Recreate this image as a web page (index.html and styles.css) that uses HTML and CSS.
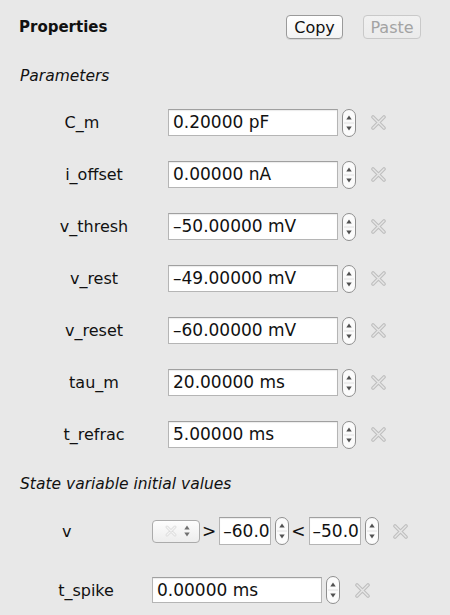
FILE: index.html
```html
<!DOCTYPE html>
<html>
<head>
<meta charset="utf-8">
<link rel="stylesheet" href="styles.css">
</head>
<body>
<div class="panel">
  <div class="header">
    <div class="title">Properties</div>
    <div class="btns">
      <button class="btn">Copy</button>
      <button class="btn disabled">Paste</button>
    </div>
  </div>

  <div class="section first">Parameters</div>

  <div class="rows">
    <div class="row">
      <div class="lbl lbl-cm">C_m</div>
      <div class="field">0.20000 pF</div>
      <svg class="stepper" width="14" height="28" viewBox="0 0 14 28"><rect x="0.5" y="0.5" width="13" height="27" rx="6.5" fill="#fbfbfb" stroke="#8e8e8e"/><line x1="2" y1="14" x2="12" y2="14" stroke="#e0e0e0"/><path d="M7 6.5 L9.7 10.5 L4.3 10.5 Z" fill="#505050"/><path d="M7 21.5 L9.7 17.5 L4.3 17.5 Z" fill="#505050"/></svg>
      <svg class="xicon" width="15" height="15" viewBox="0 0 15 15"><path d="M2 2 L13 13 M13 2 L2 13" stroke="#bfbfbf" stroke-width="3.6" stroke-linecap="round"/><path d="M2 2 L13 13 M13 2 L2 13" stroke="#e6e6e6" stroke-width="1.4" stroke-linecap="round"/></svg>
    </div>
    <div class="row">
      <div class="lbl">i_offset</div>
      <div class="field">0.00000 nA</div>
      <svg class="stepper" width="14" height="28" viewBox="0 0 14 28"><rect x="0.5" y="0.5" width="13" height="27" rx="6.5" fill="#fbfbfb" stroke="#8e8e8e"/><line x1="2" y1="14" x2="12" y2="14" stroke="#e0e0e0"/><path d="M7 6.5 L9.7 10.5 L4.3 10.5 Z" fill="#505050"/><path d="M7 21.5 L9.7 17.5 L4.3 17.5 Z" fill="#505050"/></svg>
      <svg class="xicon" width="15" height="15" viewBox="0 0 15 15"><path d="M2 2 L13 13 M13 2 L2 13" stroke="#bfbfbf" stroke-width="3.6" stroke-linecap="round"/><path d="M2 2 L13 13 M13 2 L2 13" stroke="#e6e6e6" stroke-width="1.4" stroke-linecap="round"/></svg>
    </div>
    <div class="row">
      <div class="lbl">v_thresh</div>
      <div class="field">–50.00000 mV</div>
      <svg class="stepper" width="14" height="28" viewBox="0 0 14 28"><rect x="0.5" y="0.5" width="13" height="27" rx="6.5" fill="#fbfbfb" stroke="#8e8e8e"/><line x1="2" y1="14" x2="12" y2="14" stroke="#e0e0e0"/><path d="M7 6.5 L9.7 10.5 L4.3 10.5 Z" fill="#505050"/><path d="M7 21.5 L9.7 17.5 L4.3 17.5 Z" fill="#505050"/></svg>
      <svg class="xicon" width="15" height="15" viewBox="0 0 15 15"><path d="M2 2 L13 13 M13 2 L2 13" stroke="#bfbfbf" stroke-width="3.6" stroke-linecap="round"/><path d="M2 2 L13 13 M13 2 L2 13" stroke="#e6e6e6" stroke-width="1.4" stroke-linecap="round"/></svg>
    </div>
    <div class="row">
      <div class="lbl">v_rest</div>
      <div class="field">–49.00000 mV</div>
      <svg class="stepper" width="14" height="28" viewBox="0 0 14 28"><rect x="0.5" y="0.5" width="13" height="27" rx="6.5" fill="#fbfbfb" stroke="#8e8e8e"/><line x1="2" y1="14" x2="12" y2="14" stroke="#e0e0e0"/><path d="M7 6.5 L9.7 10.5 L4.3 10.5 Z" fill="#505050"/><path d="M7 21.5 L9.7 17.5 L4.3 17.5 Z" fill="#505050"/></svg>
      <svg class="xicon" width="15" height="15" viewBox="0 0 15 15"><path d="M2 2 L13 13 M13 2 L2 13" stroke="#bfbfbf" stroke-width="3.6" stroke-linecap="round"/><path d="M2 2 L13 13 M13 2 L2 13" stroke="#e6e6e6" stroke-width="1.4" stroke-linecap="round"/></svg>
    </div>
    <div class="row">
      <div class="lbl">v_reset</div>
      <div class="field">–60.00000 mV</div>
      <svg class="stepper" width="14" height="28" viewBox="0 0 14 28"><rect x="0.5" y="0.5" width="13" height="27" rx="6.5" fill="#fbfbfb" stroke="#8e8e8e"/><line x1="2" y1="14" x2="12" y2="14" stroke="#e0e0e0"/><path d="M7 6.5 L9.7 10.5 L4.3 10.5 Z" fill="#505050"/><path d="M7 21.5 L9.7 17.5 L4.3 17.5 Z" fill="#505050"/></svg>
      <svg class="xicon" width="15" height="15" viewBox="0 0 15 15"><path d="M2 2 L13 13 M13 2 L2 13" stroke="#bfbfbf" stroke-width="3.6" stroke-linecap="round"/><path d="M2 2 L13 13 M13 2 L2 13" stroke="#e6e6e6" stroke-width="1.4" stroke-linecap="round"/></svg>
    </div>
    <div class="row">
      <div class="lbl">tau_m</div>
      <div class="field">20.00000 ms</div>
      <svg class="stepper" width="14" height="28" viewBox="0 0 14 28"><rect x="0.5" y="0.5" width="13" height="27" rx="6.5" fill="#fbfbfb" stroke="#8e8e8e"/><line x1="2" y1="14" x2="12" y2="14" stroke="#e0e0e0"/><path d="M7 6.5 L9.7 10.5 L4.3 10.5 Z" fill="#505050"/><path d="M7 21.5 L9.7 17.5 L4.3 17.5 Z" fill="#505050"/></svg>
      <svg class="xicon" width="15" height="15" viewBox="0 0 15 15"><path d="M2 2 L13 13 M13 2 L2 13" stroke="#bfbfbf" stroke-width="3.6" stroke-linecap="round"/><path d="M2 2 L13 13 M13 2 L2 13" stroke="#e6e6e6" stroke-width="1.4" stroke-linecap="round"/></svg>
    </div>
    <div class="row">
      <div class="lbl">t_refrac</div>
      <div class="field">5.00000 ms</div>
      <svg class="stepper" width="14" height="28" viewBox="0 0 14 28"><rect x="0.5" y="0.5" width="13" height="27" rx="6.5" fill="#fbfbfb" stroke="#8e8e8e"/><line x1="2" y1="14" x2="12" y2="14" stroke="#e0e0e0"/><path d="M7 6.5 L9.7 10.5 L4.3 10.5 Z" fill="#505050"/><path d="M7 21.5 L9.7 17.5 L4.3 17.5 Z" fill="#505050"/></svg>
      <svg class="xicon" width="15" height="15" viewBox="0 0 15 15"><path d="M2 2 L13 13 M13 2 L2 13" stroke="#bfbfbf" stroke-width="3.6" stroke-linecap="round"/><path d="M2 2 L13 13 M13 2 L2 13" stroke="#e6e6e6" stroke-width="1.4" stroke-linecap="round"/></svg>
    </div>
  </div>

  <div class="section second">State variable initial values</div>

  <div class="row row-v">
    <div class="lbl lbl-v">v</div>
    <div class="popup">
      <svg width="14" height="14" viewBox="0 0 14 14"><path d="M3 3 L11 11 M11 3 L3 11" stroke="#dcdcdc" stroke-width="3" stroke-linecap="round"/><path d="M3 3 L11 11 M11 3 L3 11" stroke="#f4f4f4" stroke-width="1.2" stroke-linecap="round"/></svg>
      <svg width="8" height="14" viewBox="0 0 8 14"><path d="M4 1.5 L6.7 5.5 L1.3 5.5 Z" fill="#707070"/><path d="M4 12.5 L6.7 8.5 L1.3 8.5 Z" fill="#707070"/></svg>
    </div>
    <span class="op">&gt;</span>
    <div class="field small">–60.0</div>
    <svg class="stepper s-mini" width="14" height="28" viewBox="0 0 14 28"><rect x="0.5" y="0.5" width="13" height="27" rx="6.5" fill="#fbfbfb" stroke="#8e8e8e"/><line x1="2" y1="14" x2="12" y2="14" stroke="#e0e0e0"/><path d="M7 6.5 L9.7 10.5 L4.3 10.5 Z" fill="#505050"/><path d="M7 21.5 L9.7 17.5 L4.3 17.5 Z" fill="#505050"/></svg>
    <span class="op">&lt;</span>
    <div class="field small">–50.0</div>
    <svg class="stepper s-mini" width="14" height="28" viewBox="0 0 14 28"><rect x="0.5" y="0.5" width="13" height="27" rx="6.5" fill="#fbfbfb" stroke="#8e8e8e"/><line x1="2" y1="14" x2="12" y2="14" stroke="#e0e0e0"/><path d="M7 6.5 L9.7 10.5 L4.3 10.5 Z" fill="#505050"/><path d="M7 21.5 L9.7 17.5 L4.3 17.5 Z" fill="#505050"/></svg>
    <svg class="xicon x-v" width="15" height="15" viewBox="0 0 15 15"><path d="M2 2 L13 13 M13 2 L2 13" stroke="#bfbfbf" stroke-width="3.6" stroke-linecap="round"/><path d="M2 2 L13 13 M13 2 L2 13" stroke="#e6e6e6" stroke-width="1.4" stroke-linecap="round"/></svg>
  </div>

  <div class="row row-spike">
    <div class="lbl lbl-state">t_spike</div>
    <div class="field">0.00000 ms</div>
    <svg class="stepper" width="14" height="28" viewBox="0 0 14 28"><rect x="0.5" y="0.5" width="13" height="27" rx="6.5" fill="#fbfbfb" stroke="#8e8e8e"/><line x1="2" y1="14" x2="12" y2="14" stroke="#e0e0e0"/><path d="M7 6.5 L9.7 10.5 L4.3 10.5 Z" fill="#505050"/><path d="M7 21.5 L9.7 17.5 L4.3 17.5 Z" fill="#505050"/></svg>
    <svg class="xicon" width="15" height="15" viewBox="0 0 15 15"><path d="M2 2 L13 13 M13 2 L2 13" stroke="#bfbfbf" stroke-width="3.6" stroke-linecap="round"/><path d="M2 2 L13 13 M13 2 L2 13" stroke="#e6e6e6" stroke-width="1.4" stroke-linecap="round"/></svg>
  </div>
</div>
</body>
</html>
```

FILE: styles.css
```css
html, body {
  margin: 0;
  padding: 0;
  background: #e8e8e8;
}
body {
  font-family: "DejaVu Sans", "Liberation Sans", sans-serif;
  color: #111;
  width: 450px;
  height: 615px;
  overflow: hidden;
}
.panel {
  padding: 15px 0 0 20px;
}
.header {
  display: flex;
  align-items: center;
  height: 24px;
}
.title {
  font-weight: bold;
  font-size: 15px;
  width: 267px;
  margin-left: -1px;
}
.btns {
  display: flex;
  gap: 20px;
}
.btn {
  font-family: "DejaVu Sans", sans-serif;
  font-size: 16px;
  height: 24px;
  width: 57px;
  padding: 0;
  border: 1px solid #9a9a9a;
  border-radius: 4px;
  background: linear-gradient(#ffffff, #f3f3f3);
  color: #111;
  box-shadow: 0 1px 0 rgba(0,0,0,0.08);
}
.btn.disabled {
  width: 58px;
  color: #a3a3a3;
  border-color: #c9c9c9;
  background: linear-gradient(#f1f1f1, #ebebeb);
  box-shadow: none;
}
.section {
  font-style: italic;
  font-size: 15.5px;
  line-height: 20px;
  height: 20px;
}
.section.first {
  margin-top: 27px;
}
.section.second {
  margin-top: 26px;
}
.rows {
  display: flex;
  flex-direction: column;
  gap: 25px;
  margin-top: 23px;
}
.row {
  display: flex;
  align-items: center;
  height: 27px;
}
.lbl {
  box-sizing: border-box;
  width: 148px;
  text-align: center;
  font-size: 16px;
  flex-shrink: 0;
}
.lbl-cm {
  padding-right: 24px;
}
.field {
  box-sizing: border-box;
  width: 170px;
  height: 27px;
  background: #fff;
  border: 1px solid #b5b5b5;
  border-top-color: #a0a0a0;
  box-shadow: inset 0 1px 1px rgba(0,0,0,0.08);
  font-size: 17px;
  line-height: 25px;
  padding-left: 4px;
  white-space: nowrap;
  overflow: hidden;
  flex-shrink: 0;
}
.stepper {
  margin-left: 4px;
  flex-shrink: 0;
}
.xicon {
  margin-left: 15px;
  flex-shrink: 0;
}
.row-v {
  margin-top: 23px;
  height: 28px;
}
.lbl-v {
  width: 132px;
  text-align: left;
  padding-left: 42px;
}
.popup {
  box-sizing: border-box;
  width: 48px;
  height: 23px;
  border: 1px solid #ababab;
  border-radius: 4px;
  background: linear-gradient(#fdfdfd, #ededed);
  display: flex;
  align-items: center;
  justify-content: flex-end;
  gap: 5px;
  padding-right: 8px;
}
.op {
  font-size: 17px;
  margin: 0 3px 0 2px;
}
.field.small {
  width: 52px;
  height: 28px;
  line-height: 26px;
  padding-left: 3px;
}
.stepper.s-mini {
  margin-left: 4px;
}
.x-v {
  margin-left: 14px;
}
.row-spike {
  margin-top: 32px;
  height: 26px;
}
.lbl-state {
  width: 132px;
}
.row-spike .field {
  height: 26px;
  line-height: 24px;
}
```
